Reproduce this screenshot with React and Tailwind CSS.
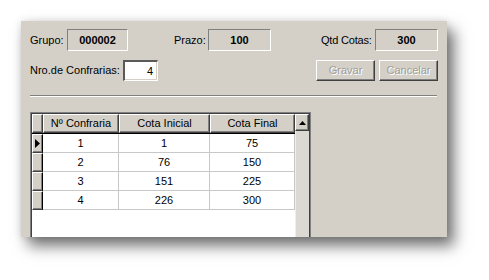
import React from 'react';

const ROWS = [
  { n: 1, ini: 1, fim: 75 },
  { n: 2, ini: 76, fim: 150 },
  { n: 3, ini: 151, fim: 225 },
  { n: 4, ini: 226, fim: 300 },
];

// classic win9x raised edge
const RAISED =
  'bg-[#d4d0c8] border-t border-l border-r border-b border-t-white border-l-white border-r-[#404040] border-b-[#404040] shadow-[inset_-1px_-1px_0_#808080]';

function ReadBox({ value, className }) {
  return (
    <div
      className={`shrink-0 h-[22px] flex items-center justify-center font-bold border-t border-l border-r border-b border-t-[#808080] border-l-[#808080] border-r-white border-b-white ${className}`}
    >
      {value}
    </div>
  );
}

function Label({ children, className }) {
  return <span className={`shrink-0 whitespace-nowrap ${className}`}>{children}</span>;
}

function DisabledButton({ label }) {
  return (
    <div
      className={`w-[59px] h-[21px] shrink-0 flex items-center justify-center text-[#a29e96] [text-shadow:1px_1px_0_#ffffff] ${RAISED}`}
    >
      {label}
    </div>
  );
}

function HeaderCell({ label, w }) {
  return (
    <div className={`${w} shrink-0 h-[19px] flex items-center justify-center whitespace-nowrap ${RAISED}`}>
      {label}
    </div>
  );
}

export default function App() {
  return (
    <div className="w-[489px] h-[280px] bg-white overflow-hidden pt-[21px] pl-[21px] font-['Liberation_Sans',Arial,sans-serif] text-[11px] text-black">
      <div className="w-[426px] h-[216px] bg-[#d4d0c8] overflow-hidden pt-[8px] pl-[9px] flex flex-col shadow-[7px_9px_14px_rgba(0,0,0,0.55),0_0_8px_rgba(0,0,0,0.12)]">
        {/* top fields */}
        <div className="flex items-center h-[22px]">
          <Label className="w-[37px]">Grupo:</Label>
          <ReadBox value="000002" className="w-[61px]" />
          <Label className="ml-[46px] w-[34px]">Prazo:</Label>
          <ReadBox value="100" className="w-[63px]" />
          <Label className="ml-[50px] w-[54px] tracking-[-0.2px]">Qtd Cotas:</Label>
          <ReadBox value="300" className="w-[63px]" />
        </div>

        <div className="flex items-center h-[21px] mt-[9px]">
          <Label className="w-[93px]">Nro.de Confrarias:</Label>
          <div className="w-[35px] h-[21px] shrink-0 bg-white flex items-center justify-end pr-[4px] border-t-2 border-l-2 border-r border-b border-t-[#5a5a5a] border-l-[#5a5a5a] border-r-white border-b-white shadow-[inset_-1px_-1px_0_#d4d0c8]">
            4
          </div>
          <div className="ml-[158px] flex gap-[4px]">
            <DisabledButton label="Gravar" />
            <DisabledButton label="Cancelar" />
          </div>
        </div>

        {/* separator */}
        <div className="mt-[14px] w-[407px] h-[2px] shrink-0 border-t border-b border-t-[#808080] border-b-white" />

        {/* grid */}
        <div className="mt-[15px] w-[281px] h-[140px] shrink-0 flex border border-[#808080] shadow-[inset_1px_1px_0_#404040] bg-white">
          <div className="flex flex-col w-[263px] mt-px ml-px">
            <div className="flex border-b border-b-black">
              <HeaderCell label="" w="w-[11px]" />
              <HeaderCell label="Nº Confraria" w="w-[76px]" />
              <HeaderCell label="Cota Inicial" w="w-[91px]" />
              <HeaderCell label="Cota Final" w="w-[85px]" />
            </div>
            {ROWS.map((r, i) => (
              <div key={r.n} className="flex h-[19px]">
                <div className={`w-[11px] h-[19px] shrink-0 flex items-center ${RAISED} border-r-black`}>
                  {i === 0 && (
                    <svg width="5" height="9" viewBox="0 0 5 9" className="ml-[2px]">
                      <path d="M0 0 L5 4.5 L0 9 Z" fill="#000" />
                    </svg>
                  )}
                </div>
                <div className="w-[76px] flex items-center justify-center border-r border-b border-[#c8c8c8]">
                  {r.n}
                </div>
                <div className="w-[91px] flex items-center justify-center border-r border-b border-[#c8c8c8]">
                  {r.ini}
                </div>
                <div className="w-[85px] flex items-center justify-center border-r border-b border-[#c8c8c8]">
                  {r.fim}
                </div>
              </div>
            ))}
          </div>

          {/* vertical scrollbar */}
          <div className="w-[16px] flex flex-col mt-px bg-[#dcd9d2] border-r border-r-[#404040]">
            <div className={`h-[17px] flex items-center justify-center ${RAISED}`}>
              <svg width="7" height="4" viewBox="0 0 7 4">
                <path d="M3.5 0 L7 4 L0 4 Z" fill="#000" />
              </svg>
            </div>
            <div className="flex-1 border-l border-l-[#eeeeee]" />
          </div>
        </div>
      </div>
    </div>
  );
}
